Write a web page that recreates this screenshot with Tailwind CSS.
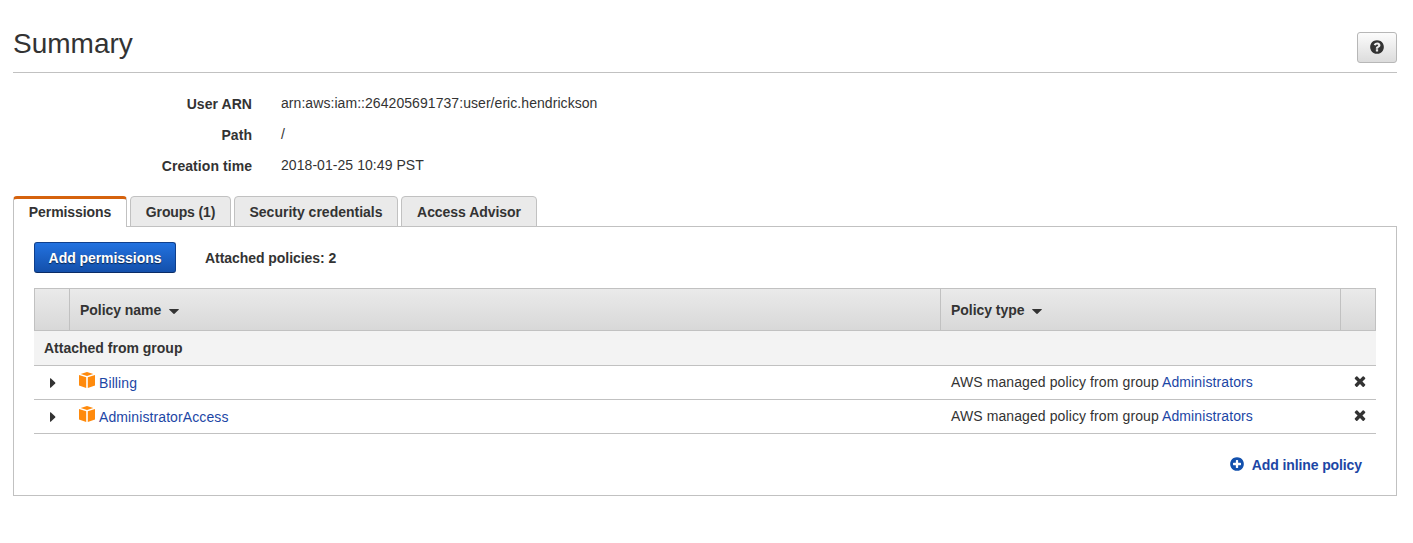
<!DOCTYPE html>
<html lang="en">
<head>
<meta charset="utf-8">
<title>Summary</title>
<script src="https://cdn.jsdelivr.net/npm/@tailwindcss/browser@4"></script>
</head>
<body class="bg-white font-['Liberation_Sans',Arial,sans-serif] text-sm leading-5 text-[#333]">
<svg class="hidden">
  <symbol id="times" viewBox="0 0 1792 1792"><path d="M1490 1322q0 40-28 68l-136 136q-28 28-68 28t-68-28l-294-294-294 294q-28 28-68 28t-68-28l-136-136q-28-28-28-68t28-68l294-294-294-294q-28-28-28-68t28-68l136-136q28-28 68-28t68 28l294 294 294-294q28-28 68-28t68 28l136 136q28 28 28 68t-28 68l-294 294 294 294q28 28 28 68z"/></symbol>
  <symbol id="cube" viewBox="0 0 16 16"><path fill="#ff8a0c" d="M8 0 14.300 2 8 4 1.700 2zM0 3.100 7.200 5.300V16L0 13.600zM16 3.100 8.800 5.300V16L16 13.600z"/></symbol>
</svg>
<main class="pr-4 pl-[13px]">
  <header class="flex h-[73px] items-start justify-between border-b border-[#c1c1c1]">
    <h1 class="pt-6 text-[28px] leading-10">Summary</h1>
    <button class="mt-8 flex h-[31px] w-10 items-center justify-center rounded-[3px] border border-[#b7b7b7] bg-linear-to-b from-[#fcfcfc] to-[#dcdcdc] pb-px" aria-label="Help">
      <svg class="size-4" viewBox="0 0 1792 1792" fill="#333"><path d="M1024 1376v-192q0-14-9-23t-23-9h-192q-14 0-23 9t-9 23v192q0 14 9 23t23 9h192q14 0 23-9t9-23zm256-672q0-88-55.500-163t-138.500-116-170-41q-243 0-371 213-15 24 8 42l132 100q7 6 19 6 16 0 25-12 53-68 86-92 34-24 86-24 48 0 85.500 26t37.500 59q0 38-20 61t-68 45q-63 28-115.500 86.500t-52.500 125.500v36q0 14 9 23t23 9h192q14 0 23-9t9-23q0-19 21.500-49.500t54.500-49.500q32-18 49-28.500t46-35 44.500-48 28-60.500 12.500-81zm384 192q0 209-103 385.500t-279.500 279.500-385.500 103-385.500-103-279.500-279.500-103-385.500 103-385.500 279.500-279.500 385.500-103 385.500 103 279.500 279.500 103 385.500z"/></svg>
    </button>
  </header>

  <dl class="grid h-[123px] auto-rows-[31px] grid-cols-[239px_1fr] gap-x-[29px] pt-5">
    <dt class="pt-px text-right font-bold tracking-[0.06px]">User ARN</dt><dd class="tracking-[0.06px]">arn:aws:iam::264205691737:user/eric.hendrickson</dd>
    <dt class="pt-px text-right font-bold tracking-[0.06px]">Path</dt><dd>/</dd>
    <dt class="pt-px text-right font-bold tracking-[0.06px]">Creation time</dt><dd class="tracking-[0.06px]">2018-01-25 10:49 PST</dd>
  </dl>

  <nav class="relative z-10 -mb-px flex gap-[3px] text-center font-bold">
    <a class="h-[31px] w-[114px] rounded-t border-x border-t-3 border-x-[#c1c1c1] border-t-[#d5620d] bg-white pt-[3px] tracking-[-0.08px]">Permissions</a>
    <a class="h-[31px] w-[101px] rounded-t border border-[#c1c1c1] bg-[#eaeaea] pt-[5px] tracking-[-0.15px]">Groups (1)</a>
    <a class="h-[31px] w-[164px] rounded-t border border-[#c1c1c1] bg-[#eaeaea] pt-[5px]">Security credentials</a>
    <a class="h-[31px] w-[136px] rounded-t border border-[#c1c1c1] bg-[#eaeaea] pt-[5px] tracking-[-0.05px]">Access Advisor</a>
  </nav>

  <section class="h-[270px] border border-[#c1c1c1] px-5 pt-[15px]">
    <div class="flex h-[46px] items-start">
      <button class="h-[31px] w-[142px] rounded-[3px] border border-[#0f3f8c] border-b-[#0a2c66] bg-linear-to-b from-[#2272e0] to-[#1450ab] pt-px font-bold tracking-[-0.05px] text-white text-shadow-[0_1px_1px_rgb(0_0_0/0.6)]">Add permissions</button>
      <span class="ml-[29px] pt-1.5 font-bold tracking-[-0.05px]">Attached policies: 2</span>
    </div>

    <div class="grid h-[43px] grid-cols-[35px_871px_400px_1fr] border border-[#c1c1c1] bg-linear-to-b from-[#eaeaea] to-[#d8d8d8] font-bold">
      <div class="border-r border-[#c1c1c1]"></div>
      <div class="flex items-center border-r border-[#c1c1c1] pl-[10px] tracking-[-0.05px]">Policy name<svg class="mt-[3px] ml-2 h-[5px] w-[10px]" viewBox="0 0 10 5" fill="#333"><path d="M.6 0h8.800q.8.200.3.800L5.500 4.800q-.5.400-1 0L.3.800Q-.2.200.6 0z"/></svg></div>
      <div class="flex items-center border-r border-[#c1c1c1] pl-[10px] tracking-[-0.05px]">Policy type<svg class="mt-[3px] ml-2 h-[5px] w-[10px]" viewBox="0 0 10 5" fill="#333"><path d="M.6 0h8.800q.8.200.3.800L5.500 4.800q-.5.400-1 0L.3.800Q-.2.200.6 0z"/></svg></div>
    </div>
    <div class="h-[35px] border-b border-[#c1c1c1] bg-[#f3f3f3] pt-[7px] pl-[10px] font-bold">Attached from group</div>
    <div class="grid h-[34px] grid-cols-[45px_872px_403px_1fr] border-b border-[#c1c1c1]">
      <svg class="mt-3 ml-4 h-[10px] w-[6px]" viewBox="0 0 6 10" fill="#333"><path d="M0 .8Q0 0 .7.300L5.200 4.600q.4.400 0 .8L.7 9.700Q0 10 0 9.200z"/></svg>
      <div class="flex"><svg class="mt-1.5 size-4"><use href="#cube"/></svg><a class="ml-1 pt-[7px] tracking-[0.1px] text-[#1c46a5]">Billing</a></div>
      <div class="pt-1.5 tracking-[0.1px]">AWS managed policy from group <a class="text-[#1c46a5]">Administrators</a></div>
      <svg class="mt-[7px] -ml-0.5 size-4" fill="#333"><use href="#times"/></svg>
    </div>
    <div class="grid h-[34px] grid-cols-[45px_872px_403px_1fr] border-b border-[#c1c1c1]">
      <svg class="mt-3 ml-4 h-[10px] w-[6px]" viewBox="0 0 6 10" fill="#333"><path d="M0 .8Q0 0 .7.300L5.200 4.600q.4.400 0 .8L.7 9.700Q0 10 0 9.200z"/></svg>
      <div class="flex"><svg class="mt-1.5 size-4"><use href="#cube"/></svg><a class="ml-1 pt-[7px] tracking-[0.1px] text-[#1c46a5]">AdministratorAccess</a></div>
      <div class="pt-1.5 tracking-[0.1px]">AWS managed policy from group <a class="text-[#1c46a5]">Administrators</a></div>
      <svg class="mt-[7px] -ml-0.5 size-4" fill="#333"><use href="#times"/></svg>
    </div>
    <a class="mt-[21px] mr-[14px] flex justify-end gap-[7px] font-bold tracking-[-0.1px] text-[#1c46a5]">
      <svg class="mt-px size-4" viewBox="0 0 1792 1792" fill="#1351ad"><path d="M1344 960v-128q0-26-19-45t-45-19h-256v-256q0-26-19-45t-45-19h-128q-26 0-45 19t-19 45v256h-256q-26 0-45 19t-19 45v128q0 26 19 45t45 19h256v256q0 26 19 45t45 19h128q26 0 45-19t19-45v-256h256q26 0 45-19t19-45zm320-64q0 209-103 385.500t-279.500 279.500-385.500 103-385.500-103-279.500-279.500-103-385.500 103-385.500 279.500-279.500 385.500-103 385.500 103 279.500 279.500 103 385.500z"/></svg>
      Add inline policy</a>
  </section>
</main>
</body>
</html>
